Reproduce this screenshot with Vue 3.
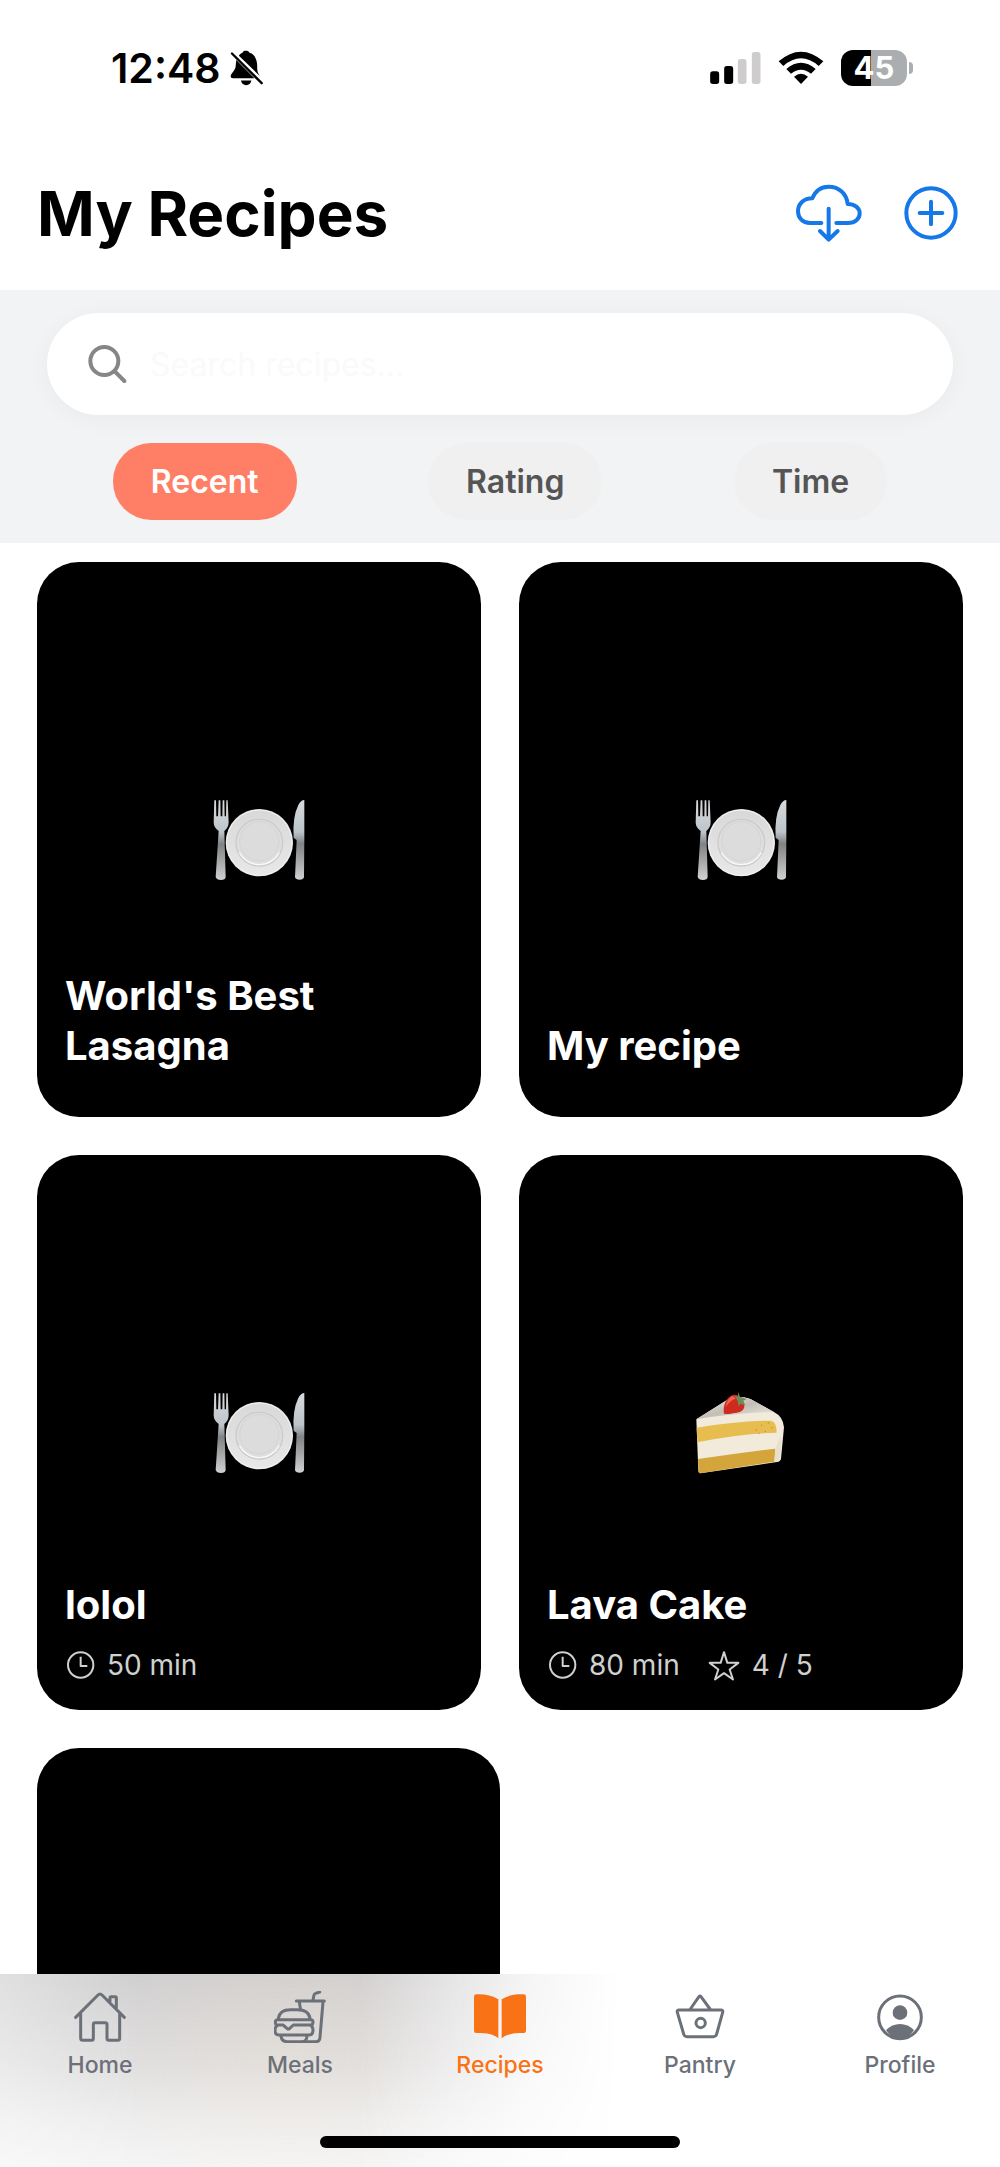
<template>
  <div class="app">
    <!-- Device status bar -->
    <div class="status-bar">
      <div class="status-time">
        <span>12:48</span>
        <svg class="bell" viewBox="418 60 106 108" aria-hidden="true">
          <path d="M469 62c-5 0-9 2-10 6-5 2-9 5-11 9l65 63c-3-5-8-11-9-18-1-9 0-18-2-27-3-14-10-24-22-27-2-4-6-6-11-6z" />
          <path d="M440 90c-1 6-1 13-2 20-2 13-14 19-15 29 0 4 3 6 7 6h65z" />
          <path d="M454 152h32c-2 9-8 14-16 14s-14-5-16-14z" />
          <path d="M427 70l90 90" stroke="#000" stroke-width="7" stroke-linecap="round" />
        </svg>
      </div>
      <div class="status-icons">
        <svg class="signal" viewBox="60 60 152 102" aria-hidden="true">
          <rect x="60" y="121" width="27" height="38" rx="8" />
          <rect x="102" y="105" width="27" height="54" rx="8" />
          <rect x="143" y="84" width="26" height="75" rx="8" fill="#cfcccd" />
          <rect x="185" y="63" width="26" height="96" rx="8" fill="#cfcccd" />
        </svg>
        <svg class="wifi" viewBox="262 60 138 102" aria-hidden="true">
          <path d="M264 91q67-58 134 0l-14 14q-53-46-106 0z" />
          <path d="M287 114q44-37 88 0l-14 14q-30-24-60 0z" />
          <path d="M310 137q21-17 42 0l-21 22z" />
        </svg>
        <div class="battery">
          <span class="battery-level">45</span>
          <span class="battery-tip"></span>
        </div>
      </div>
    </div>

    <header class="header">
      <h1>My Recipes</h1>
      <div class="header-actions">
        <button type="button" class="icon-btn" aria-label="Import recipe">
          <svg class="cloud-icon" viewBox="72 72 204 180" aria-hidden="true">
            <path d="M151 192h-34c-22 0-36-15-36-35 0-22 17-39 43-39 9-22 26-35 49-35 31 0 54 21 57 52 21 0 36 12 36 28 0 17-14 29-35 29h-35" />
            <path d="M173 149v92M147 216l26 26 27-26" />
          </svg>
        </button>
        <button type="button" class="icon-btn" aria-label="Add recipe">
          <svg class="plus-icon" viewBox="399 81 162 162" aria-hidden="true">
            <circle cx="480" cy="162" r="74" />
            <path d="M480 128v68M446 162h68" />
          </svg>
        </button>
      </div>
    </header>

    <section class="filters">
      <label class="search">
        <svg viewBox="260 190 120 120" aria-hidden="true">
          <circle cx="312" cy="241" r="42" />
          <path d="M344 273l28 28" />
        </svg>
        <input v-model="query" type="text" placeholder="Search recipes..." aria-label="Search recipes" />
      </label>
      <div class="chips">
        <button
          v-for="sort in sorts"
          :key="sort"
          type="button"
          class="chip"
          :class="{ active: sort === activeSort }"
          @click="activeSort = sort"
        >{{ sort }}</button>
      </div>
    </section>

    <main class="recipes">
      <article v-for="recipe in visibleRecipes" :key="recipe.id" class="card">
        <div class="card-art">
          <svg v-if="recipe.art === 'cake'" class="cake" viewBox="44 44 276 250" aria-hidden="true">
            <defs>
              <linearGradient id="cakeTop" x1="0" y1="0" x2="1" y2="1">
                <stop offset="0" stop-color="#eee9e0" />
                <stop offset=".5" stop-color="#c3beb6" />
                <stop offset="1" stop-color="#f3eee4" />
              </linearGradient>
            </defs>
            <path d="M48 128L140 70q50-18 80 2l62 35q26 13 29 45l-9 94q-2 9-12 10L60 290q-5 0-6-6z" fill="#f2ebdc" />
            <path d="M48 128L140 70q50-18 80 2l60 34Q160 108 48 128z" fill="url(#cakeTop)" />
            <path d="M49 153q120-20 222-21 18 2 18 36-110 2-238 29z" fill="#e7bd4f" />
            <path d="M53 247q120-17 232-31l-3 39L60 290q-5 0-5-5z" fill="#d3a53b" />
            <path d="M285 216l17-40-2 74-18 5z" fill="#e8dfcd" />
            <g fill="#b98a2c">
              <circle cx="228" cy="160" r="2" /><circle cx="244" cy="146" r="2" />
              <circle cx="255" cy="164" r="2" /><circle cx="264" cy="139" r="2" />
              <circle cx="275" cy="153" r="2" /><circle cx="236" cy="170" r="2" />
            </g>
            <path d="M131 111c-4-23 6-50 27-56 18-4 33 14 34 32 0 14-12 20-29 22-12 2-22 5-32 2z" fill="#cf2a1e" />
            <path d="M136 91c2-17 10-29 22-33l8 8c-12 3-21 12-30 25z" fill="#ec6350" />
            <path d="M163 58l10 2 1-15 5 16 20 6-11 6 7 13-15-5-4 10-5-20z" fill="#6d8c5b" />
          </svg>
          <svg v-else class="plate" viewBox="64 56 280 246" aria-hidden="true">
            <defs>
              <linearGradient id="steel" x1="0" y1="0" x2="0" y2="1">
                <stop offset="0" stop-color="#d9dadb" />
                <stop offset=".4" stop-color="#bcc5cb" />
                <stop offset=".55" stop-color="#808284" />
                <stop offset="1" stop-color="#d0d1d2" />
              </linearGradient>
              <linearGradient id="china" x1="0" y1="0" x2="0" y2="1">
                <stop offset="0" stop-color="#d8d8d8" />
                <stop offset="1" stop-color="#e8e8e8" />
              </linearGradient>
            </defs>
            <path d="M70 60h5l1 48h5l2-48h5l1 48h5l1-48h5l1 48h4l1-48h4l3 66q0 16-13 26l4 138q-1 9-14 9t-16-9l9-138q-15-10-15-26z" fill="url(#steel)" />
            <path d="M340 59v116l-1 116q-2 7-13 7-12 0-14-7l5-112-9-7q-4-62 14-98 8-15 18-15z" fill="url(#steel)" />
            <circle cx="205" cy="187" r="101" fill="url(#china)" />
            <circle cx="205" cy="187" r="98" fill="none" stroke="#f3f3f3" stroke-width="3" />
            <circle cx="205" cy="187" r="70" fill="#dedede" stroke="#cbcbcb" stroke-width="4" />
            <circle cx="205" cy="183" r="59" fill="#dcdcdc" stroke="#cfcfcf" stroke-width="2" />
            <path d="M145 217a68 68 0 0 0 120 0" fill="none" stroke="#f8f8f8" stroke-width="4" />
          </svg>
        </div>
        <div class="card-info">
          <h2>{{ recipe.title }}</h2>
          <div v-if="recipe.minutes" class="meta">
            <span class="meta-item">
              <svg viewBox="57 270 84 84" aria-hidden="true">
                <circle cx="98" cy="312" r="38" />
                <path d="M98 287v28h20" />
              </svg>
              {{ recipe.minutes }} min
            </span>
            <span v-if="recipe.rating" class="meta-item">
              <svg class="star" viewBox="534 266 96 92" aria-hidden="true">
                <path d="M582 272l10 32h33l-26 20 10 30-27-19-27 19 10-30-26-20h33z" />
              </svg>
              {{ recipe.rating }} / 5
            </span>
          </div>
        </div>
      </article>
    </main>

    <nav class="tab-bar">
      <div class="tab-glow"></div>
      <div class="tabs">
        <a v-for="tab in tabs" :key="tab" href="#" class="tab" :class="{ current: tab === 'Recipes' }">
          <svg v-if="tab === 'Home'" viewBox="222 153 156 156" aria-hidden="true">
            <path d="M227 232l67-67q6-6 12 0l67 67M242 221v74q0 6 6 6h27q5 0 5-6v-42q0-5 5-5h30q6 0 6 5v42q0 6 6 6h26q6 0 6-6v-74M330 184v-11q0-3 3-3h13q3 0 3 3v32" />
          </svg>
          <svg v-else-if="tab === 'Meals'" viewBox="822 154 156 156" aria-hidden="true">
            <path d="M889 184h84M898 187l3 19M969 187l-9 106q-1 13-13 13h-86q-16 0-18-17M939 181l3-15q1-4 5-5l12-4" />
            <path d="M835 236q4-26 36-26h21q34 0 38 26M832 240h100q7 0 7 8t-7 8h-52l-11 10q-4 4-8 0l-12-10h-17q-6 0-6-8t6-8zM831 258q-6 4-6 14 0 14 12 14h89q13 0 13-14 0-10-6-14M921 289q-1 15-12 17" />
          </svg>
          <svg v-else-if="tab === 'Recipes'" class="solid" viewBox="372 153 156 156" aria-hidden="true">
            <path d="M379 163c26-1 47 3 66 15v117c-15-13-33-16-66-16q-7 0-7-7v-102q0-7 7-7zM521 163c-26-1-47 3-66 15v117c15-13 33-16 66-16q7 0 7-7v-102q0-7-7-7z" />
          </svg>
          <svg v-else-if="tab === 'Pantry'" viewBox="72 153 156 156" aria-hidden="true">
            <path d="M87 210h126q7 0 5 7l-18 65q-2 8-10 8h-79q-8 0-10-8l-19-65q-2-7 5-7zM121 207l26-37q3-4 6 0l27 37" />
            <circle cx="152" cy="249" r="14" />
          </svg>
          <svg v-else viewBox="672 153 156 156" aria-hidden="true">
            <circle cx="750" cy="232" r="64" />
            <circle class="fill" cx="750" cy="218" r="22" />
            <path class="fill" d="M708 270q18-18 42-18t42 18q-18 27-42 27t-42-27z" />
          </svg>
          <span>{{ tab }}</span>
        </a>
      </div>
      <div class="home-indicator"></div>
    </nav>
  </div>
</template>

<script setup>
import { ref, computed } from 'vue';

const query = ref('');
const sorts = ['Recent', 'Rating', 'Time'];
const activeSort = ref('Recent');
const tabs = ['Home', 'Meals', 'Recipes', 'Pantry', 'Profile'];

const recipes = [
  { id: 1, title: "World's Best Lasagna", art: 'plate' },
  { id: 2, title: 'My recipe', art: 'plate' },
  { id: 3, title: 'lolol', art: 'plate', minutes: 50 },
  { id: 4, title: 'Lava Cake', art: 'cake', minutes: 80, rating: 4 },
  { id: 5, title: '', art: 'plate' }
];

const visibleRecipes = computed(() => {
  const q = query.value.trim().toLowerCase();
  return q ? recipes.filter(r => r.title.toLowerCase().includes(q)) : recipes;
});
</script>

<style>
body {
  margin: 0;
  background: #fff;
}
</style>

<style scoped>
.app {
  position: relative;
  display: flex;
  flex-direction: column;
  height: 100vh;
  overflow: hidden;
  background: #fff;
  color: #000;
  font-family: Inter, 'Liberation Sans', sans-serif;
}

button {
  border: 0;
  padding: 0;
  font: inherit;
  cursor: pointer;
}

/* Status bar */
.status-bar {
  display: flex;
  flex: none;
  align-items: center;
  justify-content: space-between;
  height: 136px;
  padding: 0 87px 0 111px;
}

.status-time {
  display: flex;
  align-items: center;
  gap: 8px;
  font-size: 41px;
  font-weight: 600;
}

.bell {
  width: 35px;
  height: 36px;
}

.status-icons {
  display: flex;
  align-items: center;
  gap: 17px;
}

.signal {
  width: 51px;
  height: 34px;
}

.wifi {
  width: 46px;
  height: 34px;
}

.battery {
  display: flex;
  align-items: center;
  gap: 2px;
}

.battery-level {
  width: 66px;
  border-radius: 12px;
  background: linear-gradient(90deg, #000 45%, #abaeb1 45%);
  color: #fff;
  font-size: 31px;
  font-weight: 700;
  line-height: 36px;
  text-align: center;
}

.battery-tip {
  width: 4px;
  height: 12px;
  border-radius: 0 6px 6px 0;
  background: #abaeb1;
}

/* Header */
.header {
  display: flex;
  flex: none;
  align-items: center;
  justify-content: space-between;
  height: 154px;
  padding: 0 42px 0 37px;
}

h1 {
  margin: 0;
  font-size: 62px;
  font-weight: 700;
}

.header-actions {
  display: flex;
  align-items: center;
  gap: 41px;
}

.icon-btn {
  display: flex;
  background: none;
}

.icon-btn svg {
  fill: none;
  stroke: #1478e8;
  stroke-width: 12;
  stroke-linecap: round;
  stroke-linejoin: round;
}

.cloud-icon {
  width: 68px;
  height: 60px;
}

.plus-icon {
  width: 54px;
  height: 54px;
}

/* Search and sorting */
.filters {
  flex: none;
  padding: 23px 47px;
  background: #f2f3f5;
}

.search {
  display: flex;
  align-items: center;
  gap: 23px;
  height: 102px;
  padding: 0 40px;
  border-radius: 51px;
  background: #fff;
  box-shadow: 0 4px 24px rgba(0, 0, 0, 0.04);
}

.search svg {
  flex: none;
  width: 40px;
  height: 40px;
  fill: none;
  stroke: #858688;
  stroke-width: 12;
  stroke-linecap: round;
}

.search input {
  flex: 1;
  min-width: 0;
  border: 0;
  padding: 0;
  outline: none;
  background: none;
  font-family: inherit;
  font-size: 32px;
}

.search input::placeholder {
  color: #fafafa;
  opacity: 1;
}

.chips {
  display: flex;
  justify-content: space-around;
  margin-top: 28px;
}

.chip {
  padding: 0 38px;
  border-radius: 38px;
  background: #f0f0f0;
  color: #555;
  font-size: 32px;
  font-weight: 600;
  line-height: 77px;
}

.chip.active {
  background: #ff7f66;
  color: #fff;
}

/* Recipe grid */
.recipes {
  display: grid;
  flex: 1;
  grid-template-columns: 1fr 1fr;
  align-content: start;
  gap: 38px;
  min-height: 0;
  padding: 19px 37px;
  overflow: hidden;
}

.card {
  display: grid;
  aspect-ratio: 4 / 5;
  border-radius: 42px;
  background: #000;
  color: #fff;
}

/* A lone card on the last row takes half of the full width */
.card:last-child:nth-child(odd) {
  grid-column: span 2;
  width: 50%;
}

.card-art,
.card-info {
  grid-area: 1 / 1;
}

.card-art {
  display: flex;
  align-items: center;
  justify-content: center;
}

.plate {
  width: 94px;
  height: 82px;
}

.cake {
  width: 92px;
  height: 84px;
}

.card-info {
  align-self: end;
  padding: 28px;
}

h2 {
  margin: 0 0 18px;
  font-size: 40px;
  font-weight: 700;
  line-height: 50px;
}

.meta {
  display: flex;
  gap: 28px;
  padding-left: 2px;
  color: #d0d0d0;
  font-size: 28px;
  line-height: 34px;
}

.meta-item {
  display: flex;
  align-items: center;
  gap: 12px;
}

.meta-item svg {
  width: 28px;
  height: 28px;
  fill: none;
  stroke: currentColor;
  stroke-width: 6;
  stroke-linejoin: round;
}

.meta-item .star {
  width: 32px;
  height: 31px;
}

/* Bottom tab bar */
.tab-bar {
  position: absolute;
  right: 0;
  bottom: 0;
  left: 0;
  overflow: hidden;
  background: #fff;
}

.tab-glow {
  position: absolute;
  inset: 0;
  background:
    radial-gradient(ellipse 20% 80% at 29% 40%, rgba(250, 225, 195, 0.16), transparent),
    linear-gradient(rgba(5, 0, 5, 0.19), rgba(5, 0, 5, 0.13) 45%, rgba(5, 0, 5, 0.07) 75%, rgba(5, 0, 5, 0.04));
  mask-image: linear-gradient(90deg, rgba(0, 0, 0, 0.65), #000 14%, #000 36%, rgba(0, 0, 0, 0.55) 45%, rgba(0, 0, 0, 0.2) 53%, transparent 62%);
}

.tabs {
  position: relative;
  display: flex;
  padding-top: 17px;
}

.tab {
  display: flex;
  flex: 1;
  flex-direction: column;
  align-items: center;
  gap: 8px;
  color: #6c7078;
  font-size: 23px;
  font-weight: 500;
  line-height: 28px;
  text-decoration: none;
}

.tab.current {
  color: #f97316;
}

.tab svg {
  width: 52px;
  height: 52px;
  fill: none;
  stroke: currentColor;
  stroke-width: 9;
  stroke-linecap: round;
  stroke-linejoin: round;
}

.tab .solid,
.tab .fill {
  fill: currentColor;
  stroke: none;
}

.home-indicator {
  position: relative;
  width: 36%;
  height: 12px;
  margin: 57px auto 19px;
  border-radius: 6px;
  background: #000;
}
</style>
